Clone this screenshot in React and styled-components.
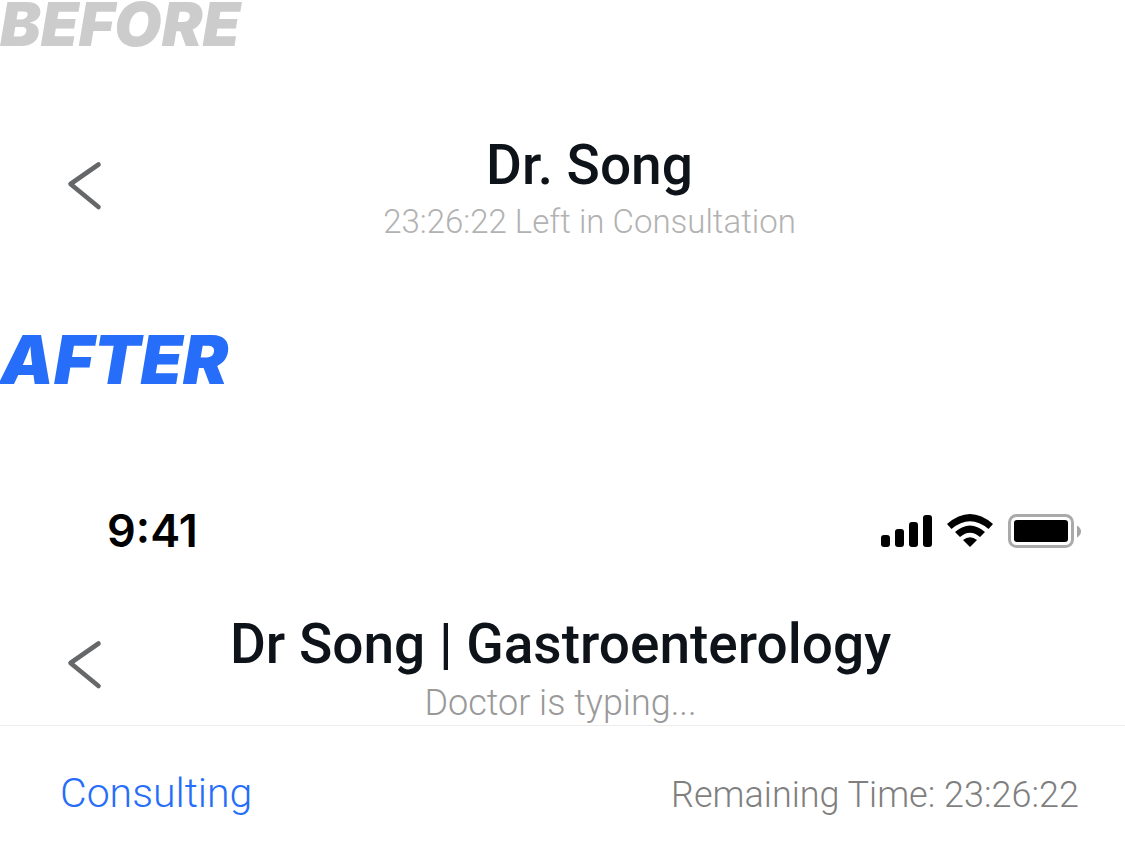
import React from "react";
import styled, { createGlobalStyle } from "styled-components";

const GlobalStyle = createGlobalStyle`
  * { box-sizing: border-box; }
  body {
    margin: 0;
    background: #ffffff;
    font-family: Roboto, "Liberation Sans", sans-serif;
  }
`;

const Page = styled.main`
  display: flex;
  flex-direction: column;
`;

const Label = styled.h2`
  margin: 0;
  font-family: Inter, "Liberation Sans", sans-serif;
  font-size: ${(p) => p.$size}px;
  line-height: 48px;
  font-weight: 900;
  font-style: italic;
  color: ${(p) => p.$color};
`;

const Example = styled.section`
  display: flex;
  flex-direction: column;
  padding-top: ${(p) => p.$top}px;
  padding-bottom: ${(p) => p.$bottom}px;
`;

const NavBar = styled.header`
  display: grid;
  grid-template-columns: 120px minmax(0, 1fr) ${(p) => p.$end}px;
  align-items: start;
`;

const BackButton = styled.button`
  display: flex;
  width: 64px;
  height: 64px;
  margin: 22px 0 0 52px;
  padding: 0;
  border: 0;
  background: none;
  color: #666769;
  cursor: pointer;
`;

const Heading = styled.div`
  display: flex;
  flex-direction: column;
  align-items: center;
  white-space: nowrap;
`;

const Title = styled.h1`
  margin: 0;
  font-size: 55px;
  line-height: 70px;
  font-weight: 500;
  color: #0e131a;
`;

const Subtitle = styled.p`
  margin: 2px 0 0;
  font-size: ${(p) => p.$size}px;
  line-height: ${(p) => p.$line}px;
  font-weight: 300;
  color: ${(p) => p.$color};
`;

const StatusBar = styled.div`
  display: flex;
  align-items: center;
  justify-content: space-between;
  height: 64px;
  margin-bottom: 46px;
  padding: 0 42px 0 107px;
`;

const Clock = styled.time`
  font-family: Inter, "Liberation Sans", sans-serif;
  font-size: 45px;
  line-height: 62px;
  font-weight: 600;
  color: #000000;
`;

const StatusIcons = styled.svg`
  width: 204px;
  height: 40px;
`;

const InfoBar = styled.div`
  display: flex;
  align-items: baseline;
  justify-content: space-between;
  padding: 41px 46px 32px 60px;
  border-top: 1px solid #ececec;
  font-weight: 300;
  line-height: 52px;
  white-space: nowrap;
`;

const State = styled.span`
  font-size: 41px;
  color: #266ef9;
`;

const Remaining = styled.span`
  font-size: 36px;
  color: #7f7f7f;
`;

function Back() {
  return (
    <BackButton type="button" aria-label="Back">
      <svg width="64" height="64" viewBox="0 0 64 64" fill="none" stroke="currentColor">
        <path d="M46.5 12.5 18.5 32 46.5 55" strokeWidth="4.6" strokeLinecap="round" strokeLinejoin="round" />
      </svg>
    </BackButton>
  );
}

function DeviceStatus() {
  return (
    <StatusIcons viewBox="0 0 204 40" role="img" aria-label="Signal, Wi-Fi and battery">
      <rect x="2" y="24" width="9" height="12" rx="3" />
      <rect x="16" y="18" width="9" height="18" rx="3" />
      <rect x="30" y="11" width="9" height="25" rx="3" />
      <rect x="44" y="4" width="9" height="32" rx="3" />
      <path d="M68 13Q91 -7 114 13L109.500 18Q91 2.500 72.500 18Z" />
      <path d="M76 21Q91 8 106 21L101 26Q91 17.500 81 26Z" />
      <path d="M84 29Q91 23.500 98 29L91 36Z" />
      <rect x="130.500" y="4.500" width="63" height="31" rx="7" fill="none" stroke="#aaaaaa" strokeWidth="3" />
      <rect x="135" y="9" width="54" height="22" rx="3" />
      <path d="M198 14.500Q202 17 202 20.500Q202 24 198 26.500Z" fill="#a5a5a5" />
    </StatusIcons>
  );
}

export default function App() {
  return (
    <Page>
      <GlobalStyle />
      <Label $color="#cccccc" $size={61}>BEFORE</Label>
      <Example $top={82} $bottom={93}>
        <NavBar $end={66}>
          <Back />
          <Heading>
            <Title>Dr. Song</Title>
            <Subtitle $size={33} $line={40} $color="#b2b2b2">23:26:22 Left in Consultation</Subtitle>
          </Heading>
        </NavBar>
      </Example>
      <Label $color="#266ef9" $size={68}>AFTER</Label>
      <Example $top={116} $bottom={0}>
        <StatusBar>
          <Clock>9:41</Clock>
          <DeviceStatus />
        </StatusBar>
        <NavBar $end={124}>
          <Back />
          <Heading>
            <Title>Dr Song | Gastroenterology</Title>
            <Subtitle $size={36} $line={44} $color="#999999">Doctor is typing...</Subtitle>
          </Heading>
        </NavBar>
        <InfoBar>
          <State>Consulting</State>
          <Remaining>Remaining Time: 23:26:22</Remaining>
        </InfoBar>
      </Example>
    </Page>
  );
}
